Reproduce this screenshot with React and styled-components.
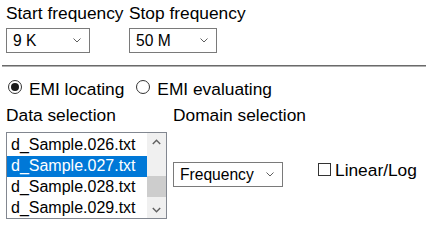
import React from "react";
import styled, { createGlobalStyle } from "styled-components";

const Global = createGlobalStyle`
  html, body { margin: 0; padding: 0; background: #fff; }
  body {
    font-family: "Liberation Sans", Arial, sans-serif;
    font-size: 17.33px;
    color: #000;
  }
`;

const Page = styled.div`
  width: 428px;
  height: 227px;
  padding: 0 2px;
  box-sizing: border-box;
  overflow: hidden;
`;

const FreqRow = styled.div`
  display: grid;
  grid-template-columns: 123px auto;
  padding: 3px 0 0 4px;
`;

const Field = styled.div`
  display: flex;
  flex-direction: column;
  align-items: flex-start;
`;

const Label = styled.div`
  font-size: 17.33px;
  line-height: 20px;
  white-space: nowrap;
`;

const SelectBox = styled.div`
  box-sizing: border-box;
  width: ${(p) => p.$width}px;
  height: 25px;
  margin-top: ${(p) => p.$offset || 0}px;
  border: 1px solid #7a7a7a;
  background: #fff;
  display: flex;
  align-items: center;
  justify-content: space-between;
  padding: 0 8px 0 6px;
  font-size: 15.6px;
  line-height: 23px;
  white-space: nowrap;
`;

const Chevron = styled.svg`
  flex: none;
  width: 8px;
  height: 5px;
`;

const Select = ({ width, offset, children }) => (
  <SelectBox $width={width} $offset={offset}>
    <span>{children}</span>
    <Chevron viewBox="0 0 8 5">
      <path d="M0.5 0.5 L4 4 L7.5 0.5" fill="none" stroke="#5f5f5f" strokeWidth="1" />
    </Chevron>
  </SelectBox>
);

const Rule = styled.div`
  margin-top: 12px;
  height: 0;
  border-top: 1px solid #6a6a6a;
  border-bottom: 1px solid #b0b0b0;
`;

const RadioRow = styled.div`
  display: flex;
  align-items: flex-start;
  gap: 12px;
  margin-top: 12px;
  padding-left: 6px;
`;

const RadioOption = styled.label`
  display: flex;
  align-items: flex-start;
  gap: 7px;
  line-height: 20px;
  white-space: nowrap;
`;

const RadioCircle = styled.span`
  box-sizing: border-box;
  width: 14px;
  height: 14px;
  margin-top: 1px;
  border-radius: 50%;
  border: 1px solid #333;
  background: #fff;
  display: flex;
  align-items: center;
  justify-content: center;
  &::after {
    content: "";
    width: 8px;
    height: 8px;
    border-radius: 50%;
    background: #1a1a1a;
    display: ${(p) => (p.$checked ? "block" : "none")};
  }
`;

const SelectionRow = styled.div`
  display: flex;
  align-items: flex-start;
  margin-top: 6px;
  padding-left: 4px;
`;

const DataColumn = styled.div`
  width: 167px;
  display: flex;
  flex-direction: column;
`;

const DomainColumn = styled.div`
  width: 145px;
  display: flex;
  flex-direction: column;
`;

const ListBox = styled.div`
  box-sizing: border-box;
  margin-top: 7px;
  width: 161px;
  height: 87px;
  border: 1px solid #828790;
  display: flex;
  background: #fff;
  font-size: 16px;
`;

const ListItems = styled.div`
  flex: 1;
  overflow: hidden;
`;

const ListInner = styled.div`
  margin-top: -19px;
`;

const ListItem = styled.div`
  height: 21px;
  box-sizing: border-box;
  padding: 0 0 1px 4px;
  line-height: 20px;
  white-space: nowrap;
  background: ${(p) => (p.$selected ? "#0078d7" : "transparent")};
  color: ${(p) => (p.$selected ? "#fff" : "#000")};
`;

const ScrollBar = styled.div`
  width: 19px;
  flex: none;
  background: #f0f0f0;
  display: flex;
  flex-direction: column;
`;

const ScrollButton = styled.div`
  height: 17px;
  display: flex;
  align-items: center;
  justify-content: center;
`;

const ScrollTrack = styled.div`
  flex: 1;
  display: flex;
  flex-direction: column;
  padding-top: 26px;
`;

const ScrollThumb = styled.div`
  height: 21px;
  background: #cdcdcd;
`;

const ArrowIcon = styled.svg`
  width: 9px;
  height: 6px;
`;

const CheckOption = styled.label`
  display: flex;
  align-items: flex-start;
  gap: 4px;
  margin-top: 55px;
  line-height: 20px;
  white-space: nowrap;
`;

const CheckBox = styled.span`
  box-sizing: border-box;
  width: 13px;
  height: 13px;
  margin-top: 3px;
  border: 1px solid #333;
  background: #fff;
`;

const files = [
  "d_Sample.025.txt",
  "d_Sample.026.txt",
  "d_Sample.027.txt",
  "d_Sample.028.txt",
  "d_Sample.029.txt",
];

export default function App() {
  return (
    <>
      <Global />
      <Page>
        <FreqRow>
          <Field>
            <Label>Start frequency</Label>
            <Select width={84} offset={5}>9 K</Select>
          </Field>
          <Field>
            <Label>Stop frequency</Label>
            <Select width={88} offset={5}>50 M</Select>
          </Field>
        </FreqRow>
        <Rule />
        <RadioRow>
          <RadioOption>
            <RadioCircle $checked />
            EMI locating
          </RadioOption>
          <RadioOption>
            <RadioCircle />
            EMI evaluating
          </RadioOption>
        </RadioRow>
        <SelectionRow>
          <DataColumn>
            <Label>Data selection</Label>
            <ListBox>
              <ListItems>
                <ListInner>
                  {files.map((f) => (
                    <ListItem key={f} $selected={f === "d_Sample.027.txt"}>
                      {f}
                    </ListItem>
                  ))}
                </ListInner>
              </ListItems>
              <ScrollBar>
                <ScrollButton>
                  <ArrowIcon viewBox="0 0 9 6">
                    <path d="M0.8 5 L4.5 1.2 L8.2 5" fill="none" stroke="#606060" strokeWidth="1.4" />
                  </ArrowIcon>
                </ScrollButton>
                <ScrollTrack>
                  <ScrollThumb />
                </ScrollTrack>
                <ScrollButton>
                  <ArrowIcon viewBox="0 0 9 6">
                    <path d="M0.8 1 L4.5 4.8 L8.2 1" fill="none" stroke="#606060" strokeWidth="1.4" />
                  </ArrowIcon>
                </ScrollButton>
              </ScrollBar>
            </ListBox>
          </DataColumn>
          <DomainColumn>
            <Label>Domain selection</Label>
            <Select width={110} offset={37}>Frequency</Select>
          </DomainColumn>
          <CheckOption>
            <CheckBox />
            Linear/Log
          </CheckOption>
        </SelectionRow>
      </Page>
    </>
  );
}
